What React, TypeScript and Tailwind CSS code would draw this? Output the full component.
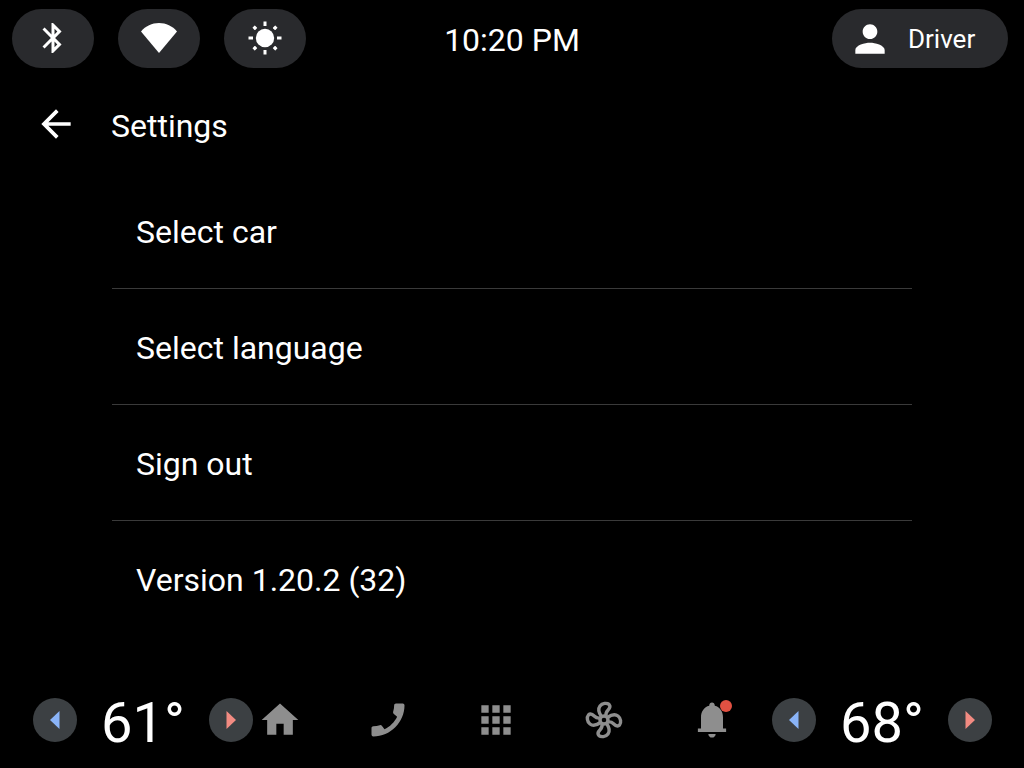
import type { ReactNode } from "react";

const icons = {
  bluetooth:
    "M17.71 7.71L12 2h-1v7.59L6.41 5 5 6.41 10.59 12 5 17.59 6.41 19 11 14.41V22h1l5.71-5.71-4.3-4.29 4.3-4.29zM13 5.83l1.88 1.88L13 9.59V5.83zm1.88 10.46L13 18.17v-3.76l1.88 1.88z",
  person:
    "M12 12c2.21 0 4-1.79 4-4s-1.79-4-4-4-4 1.79-4 4 1.79 4 4 4zm0 2c-2.67 0-8 1.34-8 4v2h16v-2c0-2.66-5.33-4-8-4z",
  back: "M20 11H7.83l5.59-5.59L12 4l-8 8 8 8 1.41-1.41L7.83 13H20v-2z",
  home: "M10 20v-6h4v6h5v-8h3L12 3 2 12h3v8z",
  phone:
    "M3.99 15.38c1.23 0 2.42-.2 3.53-.56.35-.12.74-.03 1.01.24l1.57 1.97c2.83-1.35 5.48-3.9 6.89-6.83l-1.95-1.66c-.27-.28-.35-.67-.24-1.02.37-1.11.56-2.3.56-3.53 0-.54.45-.99.99-.99h3.46c.54 0 1.19.24 1.19.99C21 13.28 13.27 21 3.99 21 3.28 21 3 20.37 3 19.82v-3.45c0-.54.45-.99.99-.99z",
  apps: "M4 8h4V4H4v4zm6 12h4v-4h-4v4zm-6 0h4v-4H4v4zm0-6h4v-4H4v4zm6 0h4v-4h-4v4zm6-10v4h4V4h-4zm-6 4h4V4h-4v4zm6 6h4v-4h-4v4zm0 6h4v-4h-4v4z",
  bell: "M18 16.600v-6c0-3.070-1.630-5.640-4.500-6.320V3.900c0-.83-.67-1.500-1.500-1.500s-1.500.67-1.500 1.500v.38C7.640 4.960 6 7.520 6 10.600v6H4.300v1.900h15.400v-1.900H18zM12 21.600c1.100 0 2-.9 2-2h-4c0 1.100.89 2 2 2z",
};

function Icon({ path, className }: { path: string; className: string }) {
  return (
    <svg viewBox="0 0 24 24" fill="currentColor" aria-hidden="true" className={className}>
      <path d={path} />
    </svg>
  );
}

function WifiIcon() {
  return (
    <svg viewBox="0 0 36 32" fill="currentColor" aria-hidden="true" className="h-8 w-9">
      <path d="M18 31L0 9.500C4.500 4 11 1 18 1s13.500 3 18 8.500z" />
    </svg>
  );
}

function BrightnessIcon() {
  return (
    <svg viewBox="-18 -18 36 36" fill="currentColor" aria-hidden="true" className="size-9">
      <circle r="9.200" />
      {[0, 90, 180, 270].map((a) => (
        <rect key={a} x="-1.500" y="-16.500" width="3" height="4.500" transform={`rotate(${a})`} />
      ))}
      {[45, 135, 225, 315].map((a) => (
        <rect key={a} x="-1.700" y="-16.200" width="3.400" height="3.600" rx="0.500" transform={`rotate(${a})`} />
      ))}
    </svg>
  );
}

function FanIcon() {
  return (
    <svg
      viewBox="-22 -22 44 44"
      fill="none"
      stroke="currentColor"
      strokeWidth="3.400"
      strokeLinejoin="round"
      aria-hidden="true"
      className="size-11"
    >
      <circle r="4" />
      {[0, 90, 180, 270].map((a) => (
        <path
          key={a}
          transform={`rotate(${a})`}
          d="M-2.500 -3.500C-5 -7 -6.200 -11 -4 -14C-1.800 -17 3 -17.300 5 -15.600C7 -13.500 5.500 -11.300 3.700 -9.500C2.200 -8 1.700 -6 2 -3.800"
        />
      ))}
    </svg>
  );
}

function StatusButton({ label, children }: { label: string; children: ReactNode }) {
  return (
    <button
      type="button"
      aria-label={label}
      className="flex h-[59px] w-[82px] items-center justify-center rounded-full bg-[#292a2d] pb-0.5"
    >
      {children}
    </button>
  );
}

function StepButton({ label, warm = false }: { label: string; warm?: boolean }) {
  return (
    <button
      type="button"
      aria-label={label}
      className="flex size-11 shrink-0 items-center justify-center rounded-full bg-[#3c4043]"
    >
      <svg
        viewBox="0 0 10 18"
        aria-hidden="true"
        className={warm ? "h-[18px] w-2.5 text-[#f28b82]" : "h-[18px] w-2.5 text-[#8ab4f8]"}
      >
        <path fill="currentColor" d={warm ? "M0.500 0L10 9L0.500 18z" : "M9.500 0L0 9L9.500 18z"} />
      </svg>
    </button>
  );
}

function Temperature({ value, side }: { value: number; side: string }) {
  return (
    <div className="flex items-center" role="group" aria-label={`${side} temperature`}>
      <StepButton label={`Lower ${side} temperature`} />
      <output className="w-[132px] pt-1.5 text-center text-[56px] leading-[64px]">{value}°</output>
      <StepButton label={`Raise ${side} temperature`} warm />
    </div>
  );
}

function NavButton({ label, children }: { label: string; children: ReactNode }) {
  return (
    <button type="button" aria-label={label} className="relative flex size-11 items-center justify-center text-[#8e8e8e]">
      {children}
    </button>
  );
}

const settings = ["Select car", "Select language", "Sign out", "Version 1.20.2 (32)"];

export default function App() {
  return (
    <div className="flex min-h-screen flex-col bg-black font-['Roboto',sans-serif] text-white">
      <header className="grid grid-cols-[1fr_auto_1fr] items-center pt-[9px] pr-4 pl-3">
        <div className="flex gap-6">
          <StatusButton label="Bluetooth">
            <Icon path={icons.bluetooth} className="size-9" />
          </StatusButton>
          <StatusButton label="Wi-Fi">
            <WifiIcon />
          </StatusButton>
          <StatusButton label="Brightness">
            <BrightnessIcon />
          </StatusButton>
        </div>
        <time className="pt-0.5 pl-1 text-[32px] leading-10">10:20 PM</time>
        <button
          type="button"
          className="flex h-[59px] w-44 items-center gap-4 justify-self-end rounded-full bg-[#292a2d] pl-4 text-[26px]"
        >
          <Icon path={icons.person} className="size-11" />
          <span className="pt-0.5">Driver</span>
        </button>
      </header>

      <main className="flex-1">
        <div className="flex h-28 items-center gap-[33px] pl-[34px]">
          <button type="button" aria-label="Back">
            <Icon path={icons.back} className="size-11" />
          </button>
          <h1 className="pt-1 text-[32px] leading-10">Settings</h1>
        </div>
        <ul className="mx-28 -mt-[7px] divide-y divide-[#3a3a3a] text-[32px]">
          {settings.map((item) => (
            <li key={item}>
              <button type="button" className="flex h-[115px] w-full items-center px-6 pt-0.5 text-left">
                {item}
              </button>
            </li>
          ))}
        </ul>
      </main>

      <footer className="flex h-24 items-center justify-between pr-8 pl-[33px]">
        <Temperature value={61} side="driver" />
        <nav className="flex flex-1 justify-between pr-[38px] pl-[5px]" aria-label="System">
          <NavButton label="Home">
            <Icon path={icons.home} className="size-11" />
          </NavButton>
          <NavButton label="Phone">
            <Icon path={icons.phone} className="size-11" />
          </NavButton>
          <NavButton label="Apps">
            <Icon path={icons.apps} className="size-11" />
          </NavButton>
          <NavButton label="Climate">
            <FanIcon />
          </NavButton>
          <NavButton label="Notifications">
            <Icon path={icons.bell} className="size-11" />
            <span className="absolute top-0.5 right-0.5 size-3 rounded-full bg-[#e25142]" />
          </NavButton>
        </nav>
        <Temperature value={68} side="passenger" />
      </footer>
    </div>
  );
}
